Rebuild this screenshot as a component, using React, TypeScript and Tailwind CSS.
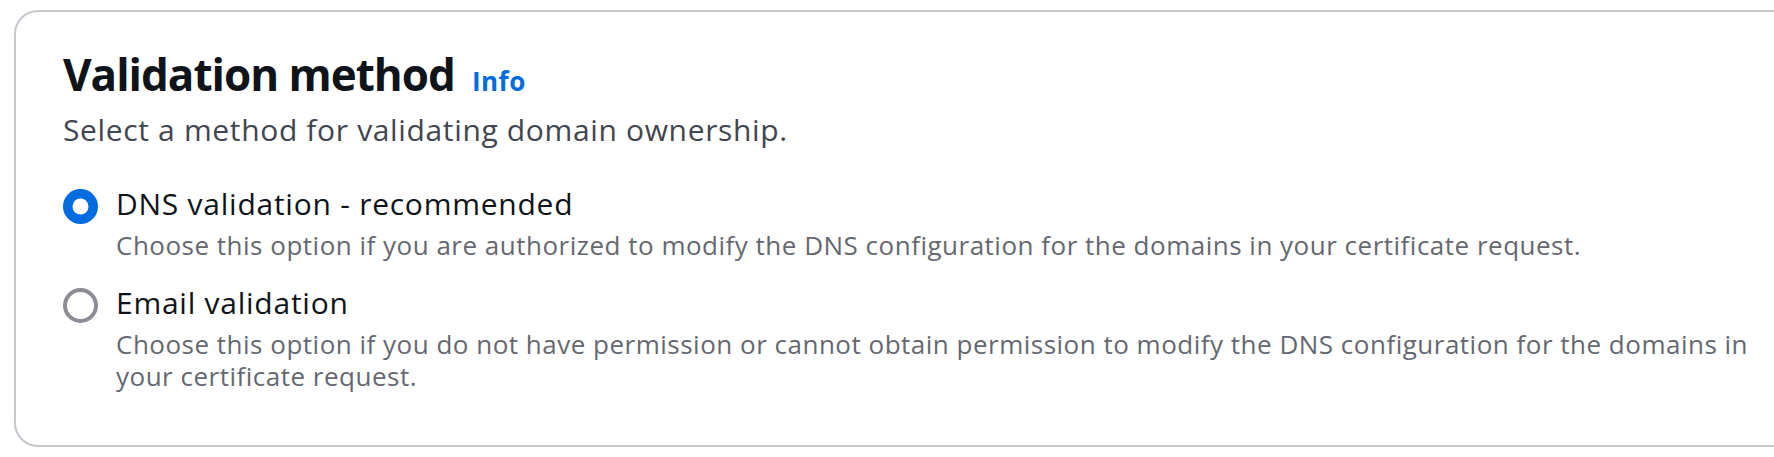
import React from "react";

function Radio({ checked }: { checked: boolean }) {
  return (
    <svg width="35" height="35" viewBox="0 0 35 35" className="shrink-0 mt-[5px]">
      {checked ? (
        <>
          <circle cx="17.5" cy="17.5" r="17.5" fill="#006ce0" />
          <circle cx="17.5" cy="17.5" r="8" fill="#ffffff" />
        </>
      ) : (
        <circle cx="17.5" cy="17.5" r="15.5" fill="#ffffff" stroke="#8c8c94" strokeWidth="4" />
      )}
    </svg>
  );
}

function Option({
  checked,
  label,
  desc,
  className,
}: {
  checked: boolean;
  label: string;
  desc: string;
  className?: string;
}) {
  return (
    <div className={"flex items-start gap-[18px] " + (className ?? "")}>
      <Radio checked={checked} />
      <div className="flex flex-col w-[1650px]">
        <div className="text-[30px] leading-[40px] tracking-[0.75px] text-[#0f141a]">{label}</div>
        <div className="text-[26px] leading-[32px] tracking-[0.5px] text-[#656871] mt-[5px]">{desc}</div>
      </div>
    </div>
  );
}

export default function App() {
  return (
    <div
      className="w-full h-[457px] overflow-hidden bg-white pt-[10px] pl-[14px]"
      style={{ fontFamily: '"Open Sans", "Noto Sans", sans-serif' }}
    >
      <div className="w-[1850px] h-[437px] border-2 border-[#c6c6cd] rounded-[24px] pl-[47px] pt-[37px]">
        <div className="flex items-baseline gap-[17px]">
          <h2 className="text-[44px] leading-[50px] font-bold text-[#0f141a] tracking-[-1px]">
            Validation method
          </h2>
          <a className="text-[26px] font-bold tracking-[0.5px] text-[#006ce0]">Info</a>
        </div>
        <p className="text-[30px] leading-[40px] tracking-[0.65px] text-[#424650] mt-[9px]">
          Select a method for validating domain ownership.
        </p>
        <Option
          className="mt-[34px]"
          checked={true}
          label="DNS validation - recommended"
          desc="Choose this option if you are authorized to modify the DNS configuration for the domains in your certificate request."
        />
        <Option
          className="mt-[22px]"
          checked={false}
          label="Email validation"
          desc="Choose this option if you do not have permission or cannot obtain permission to modify the DNS configuration for the domains in your certificate request."
        />
      </div>
    </div>
  );
}
